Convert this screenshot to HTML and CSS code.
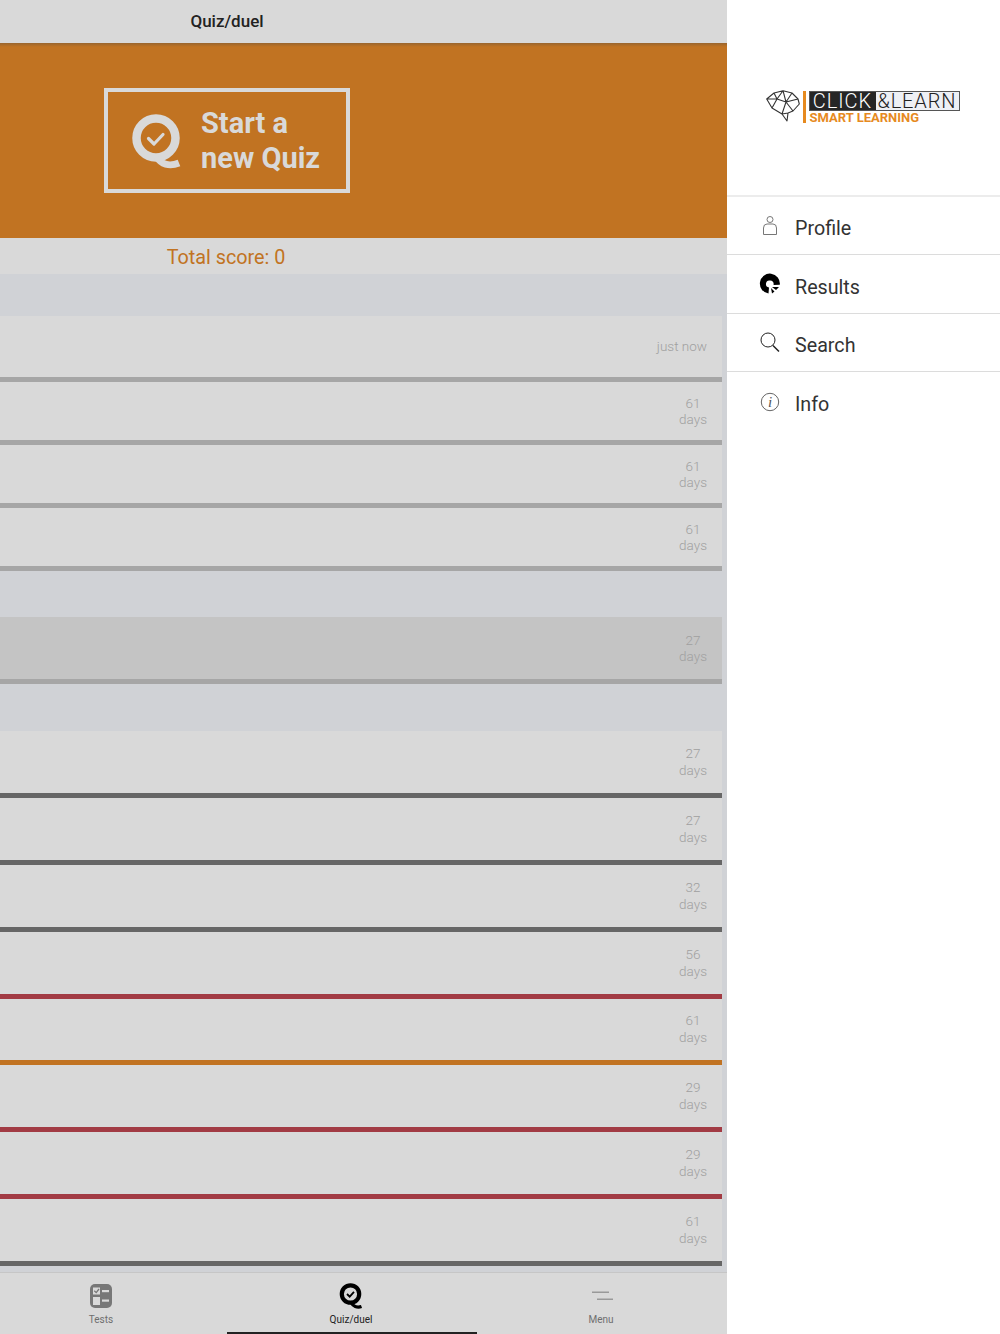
FILE: index.html
```html
<!DOCTYPE html>
<html lang="en">
<head>
<meta charset="utf-8">
<title>Quiz/duel</title>
<link rel="stylesheet" href="styles.css">
</head>
<body>
<div class="app">
  <main class="main">
    <header class="topbar"><span class="topbar-title">Quiz/duel</span></header>
    <section class="hero">
      <div class="start-box">
        <svg class="start-icon" viewBox="0 0 50 56" width="50" height="56">
          <circle cx="24" cy="24" r="19.5" fill="none" stroke="#d9d9d9" stroke-width="8.5"/>
          <path d="M25 43 C29 50 37 53 47 49" fill="none" stroke="#d9d9d9" stroke-width="7"/>
          <path d="M16.500 24.500 L22 30 L31 20.500" fill="none" stroke="#d9d9d9" stroke-width="3.200" stroke-linecap="round" stroke-linejoin="round"/>
        </svg>
        <div class="start-text">Start a<br>new Quiz</div>
      </div>
    </section>
    <div class="score"><span class="score-text">Total score: 0</span></div>
    <div class="list">
      <div class="section section-a"></div>
      <div class="row row-first bar-light"><span class="age">just now</span></div>
      <div class="row row-short bar-light"><span class="age">61<br>days</span></div>
      <div class="row row-short bar-light"><span class="age">61<br>days</span></div>
      <div class="row row-short bar-light"><span class="age">61<br>days</span></div>
      <div class="section section-c"></div>
      <div class="row row-active bar-light"><span class="age">27<br>days</span></div>
      <div class="section section-b"></div>
      <div class="row row-tall bar-dark"><span class="age">27<br>days</span></div>
      <div class="row row-tall bar-dark"><span class="age">27<br>days</span></div>
      <div class="row row-tall bar-dark"><span class="age">32<br>days</span></div>
      <div class="row row-tall bar-red"><span class="age">56<br>days</span></div>
      <div class="row row-tall bar-orange"><span class="age">61<br>days</span></div>
      <div class="row row-tall bar-red"><span class="age">29<br>days</span></div>
      <div class="row row-tall bar-red"><span class="age">29<br>days</span></div>
      <div class="row row-tall bar-dark"><span class="age">61<br>days</span></div>
    </div>
    <nav class="tabs">
      <div class="tab tab-first">
        <svg class="tab-icon" viewBox="0 0 24 26" width="24" height="26">
          <rect x="1" y="1" width="22" height="24" rx="5" fill="#777"/>
          <rect x="4" y="4.500" width="7" height="7" fill="#d9d9d9"/>
          <path d="M5.300 7.800 L7.200 9.600 L10 6" fill="none" stroke="#777" stroke-width="1.300"/>
          <rect x="13" y="7" width="7" height="2.200" fill="#d9d9d9"/>
          <rect x="4" y="14" width="7" height="8" fill="#d9d9d9"/>
          <rect x="13" y="16.500" width="7" height="2.200" fill="#d9d9d9"/>
        </svg>
        <span class="tab-label">Tests</span>
      </div>
      <div class="tab tab-active">
        <svg class="tab-icon" viewBox="0 0 24 26" width="24" height="26">
          <circle cx="11.500" cy="11" r="8.700" fill="none" stroke="#000" stroke-width="4.200"/>
          <path d="M12 19.500 C14 23 18 25 22.500 23.500" fill="none" stroke="#000" stroke-width="3.400"/>
          <path d="M8 11 L10.700 13.700 L15 8.800" fill="none" stroke="#000" stroke-width="1.800"/>
        </svg>
        <span class="tab-label">Quiz/duel</span>
      </div>
      <div class="tab">
        <svg class="tab-icon" viewBox="0 0 24 26" width="24" height="26">
          <rect x="3" y="8.500" width="17" height="1.500" fill="#999"/>
          <rect x="8" y="15.500" width="16" height="1.500" fill="#999"/>
        </svg>
        <span class="tab-label">Menu</span>
      </div>
    </nav>
  </main>
  <aside class="side">
    <div class="logo-area">
      <div class="logo">
        <svg class="brain" viewBox="0 0 34 32" width="34" height="32">
          <path d="M0.700 9 L8 3 L17 0.700 L26 3 L32 9 L33.300 14 L27 21 L22 23 L21 31 L16 24 L6 18 Z M8 3 L11 9 L0.700 9 M17 0.700 L11 9 L6 18 M11 9 L20 12 L26 3 M20 12 L32 9 M20 12 L27 21 M20 12 L16 24 M17 0.700 L20 12 M22 23 L16 24 M27 21 L22 23" fill="none" stroke="#333" stroke-width="1.100" stroke-linejoin="round"/>
        </svg>
        <div class="logo-rule"></div>
        <div class="logo-words">
          <div class="logo-title"><span class="logo-click">CLICK</span><span class="logo-learn">&amp;LEARN</span></div>
          <div class="logo-sub">SMART LEARNING</div>
        </div>
      </div>
    </div>
    <ul class="menu">
      <li class="menu-item">
        <svg class="menu-icon" viewBox="0 0 22 22" width="22" height="22">
          <circle cx="11" cy="4.500" r="3" fill="none" stroke="#777" stroke-width="1"/>
          <path d="M4.500 19.500 V13 Q4.500 9 8 9 H14 Q17.500 9 17.500 13 V19.500 Z" fill="none" stroke="#777" stroke-width="1"/>
        </svg>
        <span>Profile</span>
      </li>
      <li class="menu-item menu-item-results">
        <svg class="menu-icon" viewBox="0 0 22 22" width="22" height="22">
          <path d="M11 7.500 A3.500 3.500 0 1 0 10 14.500 L9.500 20.500 A10 10 0 1 1 20.800 11.800 L14.500 12 A3.500 3.500 0 0 0 11 7.500 Z" fill="#000"/>
          <path d="M13 14 L20 14 L17 17 Z M12 15 L15.500 18.500 L13 20.500 Z" fill="#000"/>
        </svg>
        <span>Results</span>
      </li>
      <li class="menu-item">
        <svg class="menu-icon" viewBox="0 0 22 22" width="22" height="22">
          <circle cx="9" cy="8" r="7" fill="none" stroke="#222" stroke-width="1"/>
          <path d="M14 13.500 L20 19.500" fill="none" stroke="#222" stroke-width="1.500"/>
        </svg>
        <span>Search</span>
      </li>
      <li class="menu-item">
        <svg class="menu-icon" viewBox="0 0 22 22" width="22" height="22">
          <circle cx="11" cy="11" r="8.700" fill="none" stroke="#666" stroke-width="1"/>
          <text x="11" y="16" class="info-i">i</text>
        </svg>
        <span>Info</span>
      </li>
    </ul>
  </aside>
</div>
</body>
</html>
```
FILE: styles.css
```css
* { box-sizing: border-box; }
html, body { margin: 0; padding: 0; }
body { font-family: Roboto, "Liberation Sans", sans-serif; background: #fff; }
.app { display: flex; width: 1000px; height: 1334px; overflow: hidden; }
.main { width: 727px; height: 1334px; display: flex; flex-direction: column; background: #d0d2d6; }
.topbar { height: 43px; flex: none; background: #d9d9d9; display: flex; align-items: center; justify-content: center; padding-right: 273px; font-size: 17px; font-weight: 500; color: #222; }
.topbar-title { margin-bottom: 2px; }
.hero { height: 195px; flex: none; background: linear-gradient(#99652e 0, #c17322 4px); display: flex; align-items: center; justify-content: center; padding-right: 273px; }
.start-box { width: 246px; height: 105px; border: 4px solid #d9d9d9; display: flex; align-items: center; padding: 0 0 0 24px; gap: 19px; }
.start-icon { flex: none; margin-top: 2px; }
.start-text { font-size: 29px; line-height: 35px; font-weight: 700; color: #d9d9d9; }
.score { height: 36px; flex: none; background: #d9d9d9; color: #c17322; font-size: 19.800px; display: flex; align-items: center; justify-content: center; padding-right: 275px; }
.score-text { margin-top: 2px; }
.list { flex: none; height: 992px; display: flex; flex-direction: column; padding-right: 5px; }
.section-a { height: 42px; flex: none; margin-right: -5px; }
.section-b { height: 47px; flex: none; }
.section-c { height: 46px; flex: none; }
.row { flex: none; background: #d9d9d9; border-bottom: 5px solid #a6a6a6; display: flex; align-items: center; justify-content: flex-end; padding-right: 15px; }
.row-first { height: 66px; }
.row-short { height: 63px; }
.row-tall { height: 66.875px; }
.row-active { height: 67px; background: #c4c4c4; }
.bar-light { border-bottom-color: #a6a6a6; }
.bar-dark { border-bottom-color: #666; }
.bar-red { border-bottom-color: #a23b44; }
.bar-orange { border-bottom-color: #c17322; }
.age { font-size: 13.500px; line-height: 16px; font-weight: 300; color: #a0a0a0; text-align: center; }
.row-first .age { margin-top: -2px; }
.row-tall .age { line-height: 17px; }
.tabs { height: 62px; flex: none; margin-top: 6px; background: #d9d9d9; border-top: 1px solid #c6c6c6; display: grid; grid-template-columns: 227px 250px 250px; }
.tab { display: flex; flex-direction: column; align-items: center; padding: 10px 2px 0 0; color: #6e6e6e; }
.tab-first { padding-right: 25px; }
.tab-active { color: #222; border-bottom: 2px solid #222; }
.tab-icon { display: block; }
.tab-label { font-size: 10px; line-height: 12px; margin-top: 5px; }
.side { width: 273px; height: 1334px; background: #fff; }
.logo-area { height: 197px; display: flex; align-items: flex-start; justify-content: center; padding: 90px 0 0 0; border-bottom: 2px solid #ececec; }
.logo { display: flex; align-items: flex-start; width: 196px; }
.brain { flex: none; }
.logo-rule { width: 3px; height: 32px; background: #e68a1f; margin: 1px 0 0 3px; flex: none; }
.logo-words { margin: 1px 0 0 3px; }
.logo-title { display: flex; height: 20px; width: 151px; border: 1px solid #555; font-size: 20px; line-height: 18px; font-weight: 300; letter-spacing: 1px; background: #eef0f5; color: #222; }
.logo-click { width: 66px; flex: none; background: #262626; color: #fff; text-align: center; }
.logo-learn { padding-left: 2px; white-space: nowrap; letter-spacing: .85px; }
.logo-sub { font-size: 13px; line-height: 13px; padding-left: 1px; font-weight: 700; color: #e68a1f; white-space: nowrap; }
.menu { list-style: none; margin: 0; padding: 0; }
.menu-item { height: 58.300px; display: flex; align-items: center; border-bottom: 1px solid #dcdcdc; padding-left: 32px; font-size: 19.700px; color: #333; gap: 14px; }
.menu-item:last-child { border-bottom: none; }
.menu-item span { margin-top: 6px; }
.menu-item-results span { margin-top: 8px; }
.menu-icon { flex: none; margin-top: 1px; }
.info-i { font-family: "Liberation Serif", serif; font-style: italic; font-size: 15px; text-anchor: middle; fill: #555; }
```
